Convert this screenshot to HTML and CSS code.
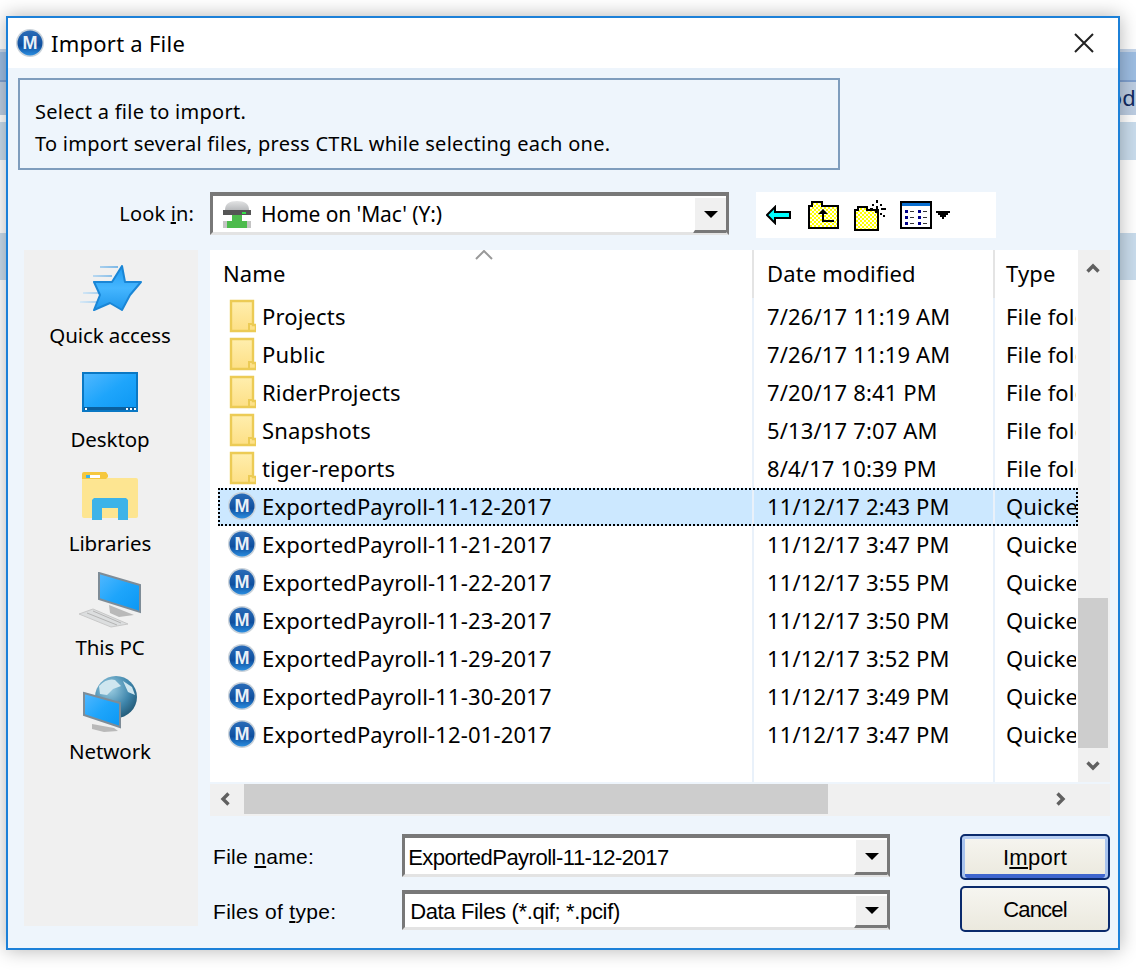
FILE: index.html
```html
<!DOCTYPE html>
<html lang="en">
<head>
  <meta charset="UTF-8" />
  <title>Import a File</title>
  <link rel="stylesheet" href="styles.css">
</head>
<body>
  <svg class="defs" width="0" height="0" aria-hidden="true">
    <defs>
      <linearGradient id="gBlue" x1="0" y1="0" x2="0" y2="1">
        <stop offset="0" stop-color="#2a6cb8"/>
        <stop offset="0.6" stop-color="#0f4f9e"/>
        <stop offset="1" stop-color="#2a8de0"/>
      </linearGradient>
      <linearGradient id="gFolder" x1="0" y1="0" x2="0" y2="1">
        <stop offset="0" stop-color="#ffeeae"/>
        <stop offset="1" stop-color="#fddf85"/>
      </linearGradient>
      <linearGradient id="gScreen" x1="0" y1="0" x2="1" y2="1">
        <stop offset="0" stop-color="#52b8ff"/>
        <stop offset="0.5" stop-color="#1ea5fb"/>
        <stop offset="1" stop-color="#0b97f3"/>
      </linearGradient>
      <linearGradient id="gStar" x1="0" y1="0" x2="0" y2="1">
        <stop offset="0" stop-color="#1f9af0"/>
        <stop offset="0.5" stop-color="#45b6ff"/>
        <stop offset="1" stop-color="#1f97ec"/>
      </linearGradient>
      <linearGradient id="gSpeed" x1="0" y1="0" x2="1" y2="0">
        <stop offset="0" stop-color="#d8e9f6"/>
        <stop offset="1" stop-color="#7db8e6"/>
      </linearGradient>
      <linearGradient id="gDome" x1="0" y1="0" x2="0" y2="1">
        <stop offset="0" stop-color="#e2e3e4"/>
        <stop offset="1" stop-color="#b9bbbd"/>
      </linearGradient>
      <radialGradient id="gGlobe" cx="0.35" cy="0.3" r="0.8">
        <stop offset="0" stop-color="#9fd0e4"/>
        <stop offset="0.6" stop-color="#3f86ac"/>
        <stop offset="1" stop-color="#1f5470"/>
      </radialGradient>
      <pattern id="checker" width="4" height="4" patternUnits="userSpaceOnUse">
        <rect width="4" height="4" fill="#ffff00"/>
        <rect width="2" height="2" fill="#fffff0"/>
        <rect x="2" y="2" width="2" height="2" fill="#fffff0"/>
      </pattern>
      <symbol id="mLogo" viewBox="0 0 28 28">
        <circle cx="14" cy="14" r="14" fill="#c9d2da"/>
        <circle cx="14" cy="14" r="12.5" fill="url(#gBlue)"/>
        <text x="14" y="20" text-anchor="middle" class="logo-m">M</text>
      </symbol>
      <symbol id="folder" viewBox="0 0 28 34">
        <path d="M3 2h22v24h3v6H3z" fill="url(#gFolder)" stroke="#eccb55" stroke-width="2.4"/>
        <path d="M21 32v-7h5" fill="none" stroke="#eccb55" stroke-width="2"/>
      </symbol>
    </defs>
  </svg>

  <div class="backdrop">
    <div class="band band-dark"></div>
    <div class="band band-mid"><span class="behind-text">od</span></div>
    <div class="band band-pale band-first"></div>
    <div class="band band-pale band-second"></div>
  </div>

  <div class="window">
    <div class="titlebar">
      <svg class="title-icon"><use href="#mLogo"/></svg>
      <span class="title-text">Import a File</span>
      <svg class="close" viewBox="0 0 20 20">
        <path d="M1 1l18 18M19 1L1 19" stroke="#222" stroke-width="2" fill="none"/>
      </svg>
    </div>

    <div class="content">
      <div class="info">
        <div>Select a file to import.</div>
        <div>To import several files, press CTRL while selecting each one.</div>
      </div>

      <div class="look-row">
        <label class="look-label">Look <u>i</u>n:</label>
        <div class="combo combo-look">
          <svg class="drive" viewBox="0 0 28 27">
            <path d="M2 9Q2 0 14 0T26 9z" fill="url(#gDome)"/>
            <rect x="0" y="9" width="28" height="5" fill="#555"/>
            <rect x="19" y="11" width="4" height="2" fill="#36e04a"/>
            <rect x="9" y="14" width="10" height="6" fill="#4dbb4d"/>
            <rect x="0" y="20" width="28" height="7" fill="#4dbb4d"/>
            <rect x="0" y="20" width="4" height="7" fill="#c4c4c4"/>
            <rect x="24" y="20" width="4" height="7" fill="#c4c4c4"/>
          </svg>
          <span class="combo-text">Home on 'Mac' (Y:)</span>
          <span class="combo-btn"></span>
        </div>
        <div class="toolbar">
          <svg class="tool-back" viewBox="0 0 25 20">
            <path d="M1 10l8-8v5h15v6H9v5z" fill="#00ffff" stroke="#000" stroke-width="2"/>
          </svg>
          <svg class="tool-up" viewBox="0 0 31 28">
            <path d="M1 27V5h3V1h10v4h16v22z" fill="url(#checker)" stroke="#000" stroke-width="2"/>
            <path d="M10 13l5-5 5 5h-4v6h10v2H14v-8z" fill="#000"/>
          </svg>
          <svg class="tool-new" viewBox="0 0 33 31">
            <path d="M1 30V10h3V7h9v3h11v20z" fill="url(#checker)" stroke="#000" stroke-width="2"/>
            <path d="M22 0h2v3h-2zM22 6h2v3h-2zM18 4h2v2h-2zM26 4h2v2h-2zM16 8h3v2h-3zM27 8h5v2h-5zM26 13h2v2h-2zM29 15h2v2h-2zM21 11h3v2h-3z" fill="#000"/>
          </svg>
          <svg class="tool-view" viewBox="0 0 32 28">
            <rect x="1" y="1" width="30" height="26" fill="#fff" stroke="#000" stroke-width="2"/>
            <rect x="2" y="2" width="28" height="3" fill="#0a6fd0"/>
            <path d="M5 9h3v3H5zM5 15h3v3H5zM5 21h3v3H5zM18 9h3v3h-3zM18 15h3v3h-3zM18 21h3v3h-3z" fill="#00008b"/>
            <path d="M10 10h4v1h-4zM10 16h4v1h-4zM10 22h4v1h-4zM23 10h4v1h-4zM23 16h4v1h-4zM23 22h4v1h-4z" fill="#333"/>
          </svg>
          <svg class="tool-caret" viewBox="0 0 14 8">
            <path d="M0 0h14v2h-2v2h-2v2H8v2H6V6H4V4H2V2H0z" fill="#000"/>
          </svg>
        </div>
      </div>

      <div class="main-row">
        <div class="sidebar">
          <div class="place">
            <div class="place-icon">
              <svg class="star" width="62" height="46" viewBox="0 0 62 46">
                <path d="M20 1h18v2H20zM13 10h19v2H13zM3 27h18v2H3zM0 36h18v2H0z" fill="url(#gSpeed)"/>
                <path d="M42 1l3 16h16L50 30l-8 15-12-7-16 7 6-15-6-13h18z" fill="url(#gStar)" stroke="#1a86d6" stroke-width="2" stroke-linejoin="round"/>
              </svg>
            </div>
            <div class="place-label">Quick access</div>
          </div>
          <div class="place">
            <div class="place-icon">
              <svg width="56" height="40" viewBox="0 0 56 40">
                <rect x="1" y="1" width="54" height="38" fill="url(#gScreen)" stroke="#0a78c4" stroke-width="2"/>
                <rect x="2" y="35" width="52" height="3" fill="#0a5f9e"/>
                <path d="M3 36h2v2H3zM44 36h2v2h-2zM48 36h2v2h-2zM52 36h2v2h-2z" fill="#fff"/>
              </svg>
            </div>
            <div class="place-label">Desktop</div>
          </div>
          <div class="place">
            <div class="place-icon">
              <svg width="56" height="48" viewBox="0 0 56 48">
                <path d="M0 6h54q2 0 2 2v36q0 2-2 2H2q-2 0-2-2z" fill="#fde591"/>
                <path d="M0 2q0-2 2-2h22l2 3v2l-2 2H0z" fill="#f6c83d"/>
                <rect x="4" y="3" width="4" height="3" fill="#3db3e8"/>
                <rect x="8" y="3" width="10" height="3" fill="#fff"/>
                <path d="M10 48V28l2-2h32l2 2v20H36V36H20v12z" fill="#3db3e8"/>
              </svg>
            </div>
            <div class="place-label">Libraries</div>
          </div>
          <div class="place">
            <div class="place-icon">
              <svg width="62" height="56" viewBox="0 0 62 56">
                <path d="M30 33l25 10-15 2-9-4z" fill="#b9b9b9"/>
                <path d="M0 42l14-5 35 15-17 3z" fill="#dcdedf" stroke="#c8c8c8"/>
                <path d="M8 41l30 12M14 39l28 12" stroke="#b4b4b4" stroke-width="1" fill="none"/>
                <path d="M20 1l41 12v27L20 27z" fill="url(#gScreen)" stroke="#7e8c97" stroke-width="2"/>
              </svg>
            </div>
            <div class="place-label">This PC</div>
          </div>
          <div class="place">
            <div class="place-icon">
              <svg width="54" height="56" viewBox="0 0 54 56">
                <circle cx="33" cy="21" r="21" fill="url(#gGlobe)"/>
                <path d="M16 10q8-8 16-6l6 6-8 3-6 6-7-1zM40 5l9 6 3 8-7-3z" fill="#cfe6ef"/>
                <path d="M1 17l36 10v24L1 39z" fill="url(#gScreen)" stroke="#7e8c97" stroke-width="2"/>
                <path d="M9 48l22 4 4 3-14 1-12-3z" fill="#b9b9b9"/>
              </svg>
            </div>
            <div class="place-label">Network</div>
          </div>
        </div>

        <div class="browser">
          <div class="list-area">
            <div class="list">
              <div class="list-head">
                <div class="cell cell-name">Name
                  <svg class="sort" viewBox="0 0 18 10"><path d="M1 9l8-8 8 8" stroke="#999" stroke-width="2" fill="none"/></svg>
                </div>
                <div class="cell cell-date">Date modified</div>
                <div class="cell cell-type">Type</div>
              </div>

              <div class="row">
                <div class="cell cell-name"><svg class="row-icon"><use href="#folder"/></svg>Projects</div>
                <div class="cell cell-date">7/26/17 11:19 AM</div>
                <div class="cell cell-type">File folder</div>
              </div>
              <div class="row">
                <div class="cell cell-name"><svg class="row-icon"><use href="#folder"/></svg>Public</div>
                <div class="cell cell-date">7/26/17 11:19 AM</div>
                <div class="cell cell-type">File folder</div>
              </div>
              <div class="row">
                <div class="cell cell-name"><svg class="row-icon"><use href="#folder"/></svg>RiderProjects</div>
                <div class="cell cell-date">7/20/17 8:41 PM</div>
                <div class="cell cell-type">File folder</div>
              </div>
              <div class="row">
                <div class="cell cell-name"><svg class="row-icon"><use href="#folder"/></svg>Snapshots</div>
                <div class="cell cell-date">5/13/17 7:07 AM</div>
                <div class="cell cell-type">File folder</div>
              </div>
              <div class="row">
                <div class="cell cell-name"><svg class="row-icon"><use href="#folder"/></svg>tiger-reports</div>
                <div class="cell cell-date">8/4/17 10:39 PM</div>
                <div class="cell cell-type">File folder</div>
              </div>
              <div class="row selected">
                <div class="cell cell-name"><svg class="row-icon"><use href="#mLogo"/></svg>ExportedPayroll-11-12-2017</div>
                <div class="cell cell-date">11/12/17 2:43 PM</div>
                <div class="cell cell-type">Quicken</div>
              </div>
              <div class="row">
                <div class="cell cell-name"><svg class="row-icon"><use href="#mLogo"/></svg>ExportedPayroll-11-21-2017</div>
                <div class="cell cell-date">11/12/17 3:47 PM</div>
                <div class="cell cell-type">Quicken</div>
              </div>
              <div class="row">
                <div class="cell cell-name"><svg class="row-icon"><use href="#mLogo"/></svg>ExportedPayroll-11-22-2017</div>
                <div class="cell cell-date">11/12/17 3:55 PM</div>
                <div class="cell cell-type">Quicken</div>
              </div>
              <div class="row">
                <div class="cell cell-name"><svg class="row-icon"><use href="#mLogo"/></svg>ExportedPayroll-11-23-2017</div>
                <div class="cell cell-date">11/12/17 3:50 PM</div>
                <div class="cell cell-type">Quicken</div>
              </div>
              <div class="row">
                <div class="cell cell-name"><svg class="row-icon"><use href="#mLogo"/></svg>ExportedPayroll-11-29-2017</div>
                <div class="cell cell-date">11/12/17 3:52 PM</div>
                <div class="cell cell-type">Quicken</div>
              </div>
              <div class="row">
                <div class="cell cell-name"><svg class="row-icon"><use href="#mLogo"/></svg>ExportedPayroll-11-30-2017</div>
                <div class="cell cell-date">11/12/17 3:49 PM</div>
                <div class="cell cell-type">Quicken</div>
              </div>
              <div class="row">
                <div class="cell cell-name"><svg class="row-icon"><use href="#mLogo"/></svg>ExportedPayroll-12-01-2017</div>
                <div class="cell cell-date">11/12/17 3:47 PM</div>
                <div class="cell cell-type">Quicken</div>
              </div>
              <div class="row row-filler">
                <div class="cell cell-name"></div>
                <div class="cell cell-date"></div>
                <div class="cell cell-type"></div>
              </div>
            </div>

            <div class="vscroll">
              <svg class="chev" viewBox="0 0 14 10"><path d="M1.5 8.5L7 3l5.5 5.5" stroke="#606060" stroke-width="3.4" fill="none"/></svg>
              <div class="vthumb"></div>
              <svg class="chev" viewBox="0 0 14 10"><path d="M1.5 1.5L7 7l5.5-5.5" stroke="#606060" stroke-width="3.4" fill="none"/></svg>
            </div>
          </div>

          <div class="hscroll">
            <svg class="chev-h" viewBox="0 0 10 14"><path d="M8.5 1.5L3 7l5.5 5.5" stroke="#606060" stroke-width="3.4" fill="none"/></svg>
            <div class="hthumb"></div>
            <svg class="chev-h" viewBox="0 0 10 14"><path d="M1.5 1.5L7 7l-5.5 5.5" stroke="#606060" stroke-width="3.4" fill="none"/></svg>
          </div>

          <div class="form-row">
            <div class="fields">
              <div class="field field-name">
                <label class="field-label">File <u>n</u>ame:</label>
                <div class="combo combo-field">
                  <span class="combo-text field-text">ExportedPayroll-11-12-2017</span>
                  <span class="combo-btn"></span>
                </div>
              </div>
              <div class="field field-type">
                <label class="field-label">Files of <u>t</u>ype:</label>
                <div class="combo combo-field">
                  <span class="combo-text field-text type-text">Data Files (*.qif; *.pcif)</span>
                  <span class="combo-btn"></span>
                </div>
              </div>
            </div>
            <div class="actions">
              <button class="btn btn-default" type="button">I<u>m</u>port</button>
              <button class="btn" type="button">Cancel</button>
            </div>
          </div>
        </div>
      </div>
    </div>
  </div>
</body>
</html>
```

FILE: styles.css
```css
html, body {
  margin: 0;
  height: 970px;
  overflow: hidden;
  background: #fff;
}

body {
  position: relative;
  font-family: "Noto Sans", sans-serif;
  font-size: 22px;
  letter-spacing: 0.15px;
  color: #000;
}

.defs {
  position: absolute;
}

.logo-m {
  font-family: "Liberation Sans", sans-serif;
  font-weight: bold;
  font-size: 18px;
  fill: #e8f0f8;
}

/* window behind the dialog */
.backdrop {
  padding-top: 49px;
}

.band {
  overflow: hidden;
}

.band-dark {
  height: 33px;
  background: #9dbde2;
  border-top: 3px solid #c6d6ea;
  border-bottom: 2px solid #7fa0cf;
  box-sizing: border-box;
}

.band-mid {
  height: 33px;
  background: #bccde2;
  text-align: right;
  font-size: 22px;
  line-height: 31px;
  color: #102a60;
}

.band-first {
  height: 38px;
  margin-top: 7px;
}

.band-second {
  height: 47px;
  margin-top: 73px;
}

.band-pale {
  background: #c9dcec;
}

/* dialog */
.window {
  position: absolute;
  left: 6px;
  top: 16px;
  width: 1114px;
  height: 934px;
  box-sizing: border-box;
  border: 2px solid #1c80d8;
  background: #eef5fc;
  box-shadow: 0 0 18px rgba(0, 0, 0, 0.3);
}

.titlebar {
  height: 50px;
  background: #fff;
  display: flex;
  align-items: center;
  padding: 0 24px 0 8px;
}

.title-icon {
  width: 28px;
  height: 28px;
  margin-right: 7px;
}

.title-text {
  flex: 1;
  letter-spacing: 0.25px;
}

.close {
  width: 20px;
  height: 20px;
}

.content {
  padding: 10px 0 0 10px;
}

.info {
  width: 822px;
  height: 92px;
  box-sizing: border-box;
  border: 2px solid #7f9dbd;
  padding: 16px 15px 0;
  line-height: 32px;
  font-size: 20px;
  letter-spacing: 0.28px;
}

.look-row {
  display: flex;
  margin-top: 22px;
  align-items: flex-start;
}

.look-label {
  width: 176px;
  text-align: right;
  line-height: 44px;
  font-size: 20px;
  margin-right: 16px;
}

.combo {
  display: flex;
  align-items: center;
  box-sizing: border-box;
  background: #fff;
  border: 3px solid #787878;
  border-bottom: 3px solid #e3e3e3;
  border-top-width: 4px;
}

.combo-look {
  width: 519px;
  height: 43px;
  padding-left: 10px;
}

.combo-look .combo-text {
  font-size: 21px;
  letter-spacing: -0.1px;
}

.drive {
  width: 28px;
  height: 27px;
  margin-right: 10px;
}

.combo-text {
  flex: 1;
  white-space: nowrap;
}

.combo-btn {
  width: 33px;
  align-self: stretch;
  margin-bottom: -1px;
  box-sizing: border-box;
  background: #f0f0f0;
  border: 2px solid #fff;
  border-right: 0;
  border-bottom: 3px solid #787878;
  display: flex;
  align-items: center;
  justify-content: center;
}

.combo-btn::after {
  content: "";
  border-top: 7px solid #000;
  border-left: 7px solid transparent;
  border-right: 7px solid transparent;
}

.toolbar {
  width: 240px;
  height: 46px;
  margin-left: 27px;
  background: #fff;
  display: flex;
  align-items: center;
  padding-left: 10px;
  box-sizing: border-box;
}

.tool-back {
  width: 25px;
  height: 20px;
  margin-right: 17px;
}

.tool-up {
  width: 31px;
  height: 28px;
  margin-right: 15px;
}

.tool-new {
  width: 33px;
  height: 31px;
  margin-right: 13px;
}

.tool-view {
  width: 32px;
  height: 28px;
  margin-right: 4px;
}

.tool-caret {
  width: 14px;
  height: 8px;
}

.main-row {
  display: flex;
  margin-top: 12px;
}

.sidebar {
  width: 174px;
  height: 676px;
  margin-left: 6px;
  background: #f0f0f0;
  padding: 10px 2px 0 0;
  box-sizing: border-box;
}

.place {
  display: flex;
  flex-direction: column;
  align-items: center;
  height: 104px;
}

.place-icon {
  height: 56px;
  display: flex;
  align-items: center;
}

.star {
  margin-left: 2px;
}

.place-label {
  margin-top: 5px;
  line-height: 28px;
  font-size: 20.5px;
  letter-spacing: -0.1px;
  white-space: nowrap;
}

.browser {
  width: 900px;
  margin-left: 12px;
}

.list-area {
  display: flex;
  height: 532px;
}

.list {
  width: 868px;
  background: #fff;
  display: flex;
  flex-direction: column;
}

.list-head,
.row {
  display: grid;
  grid-template-columns: 534px 241px 85px;
  margin-left: 8px;
  height: 38px;
  flex: none;
}

.list-head {
  height: 48px;
}

.cell {
  white-space: nowrap;
  overflow: hidden;
  display: flex;
  align-items: center;
  padding-bottom: 2px;
  box-sizing: border-box;
}

.cell-date {
  border-left: 2px solid #e9f1fa;
  padding-left: 13px;
}

.cell-type {
  border-left: 2px solid #e9f1fa;
  padding-left: 11px;
  margin-right: 2px;
}

.list-head .cell {
  border-color: #e4e4e4;
}

.list-head .cell-name {
  padding-left: 5px;
  position: relative;
}

.sort {
  position: absolute;
  left: 257px;
  top: 0;
  width: 18px;
  height: 10px;
}

.row .cell-name {
  padding-left: 10px;
}

.row-icon {
  width: 28px;
  height: 34px;
  margin-right: 6px;
  flex: none;
}

.row.selected {
  background: #cce8ff;
  outline: 2px dotted #000;
  outline-offset: -2px;
}

.row-filler {
  flex: 1;
}

.vscroll {
  width: 32px;
  background: #f0f0f0;
  display: flex;
  flex-direction: column;
  align-items: center;
  position: relative;
  box-sizing: border-box;
  padding-right: 2px;
}

.chev {
  width: 14px;
  height: 10px;
  margin: 13px 0;
}

.vthumb {
  position: absolute;
  left: 0;
  top: 348px;
  width: 30px;
  height: 150px;
  background: #cdcdcd;
}

.vscroll .chev:last-child {
  margin: auto 0 11px;
}

.hscroll {
  height: 32px;
  margin-top: 2px;
  background: #f0f0f0;
  display: flex;
  align-items: center;
  justify-content: space-between;
  position: relative;
  box-sizing: border-box;
  padding: 0 44px 2px 10px;
}

.chev-h {
  width: 10px;
  height: 14px;
}

.hthumb {
  position: absolute;
  left: 34px;
  top: 0;
  width: 584px;
  height: 30px;
  background: #cdcdcd;
}

.form-row {
  display: flex;
  margin-top: 18px;
}

.fields {
  width: 680px;
}

.field {
  display: flex;
  align-items: center;
}

.field-name {
  height: 43px;
}

.field-type {
  height: 40px;
  margin-top: 13px;
}

.field-label {
  width: 193px;
  padding: 3px 0 0 3px;
  box-sizing: border-box;
  font-family: "Liberation Sans", sans-serif;
  font-size: 21px;
  letter-spacing: 0.3px;
}

.combo-field {
  width: 490px;
  height: 100%;
  padding-left: 3px;
}

.field-text {
  font-family: "Liberation Sans", sans-serif;
  font-size: 22px;
  letter-spacing: -0.5px;
  padding-top: 3px;
}

.type-text {
  letter-spacing: -0.35px;
  padding: 2px 0 0 2px;
}

.actions {
  margin-left: 70px;
}

.btn {
  display: block;
  width: 150px;
  height: 46px;
  margin-bottom: 6px;
  border: 2px solid #0a2a6c;
  border-radius: 5px;
  background: linear-gradient(#f6f5f0, #ebe9de);
  font-family: "Liberation Sans", sans-serif;
  font-size: 22px;
  letter-spacing: -0.8px;
  color: #000;
  padding: 2px 0 0;
}

.btn-default {
  letter-spacing: 0.3px;
  box-shadow: inset 0 3px 0 #b6cdf2, inset 3px 0 0 #a8c3ee, inset -3px 0 0 #a8c3ee, inset 0 -4px 0 #3f66cf;
}
```
